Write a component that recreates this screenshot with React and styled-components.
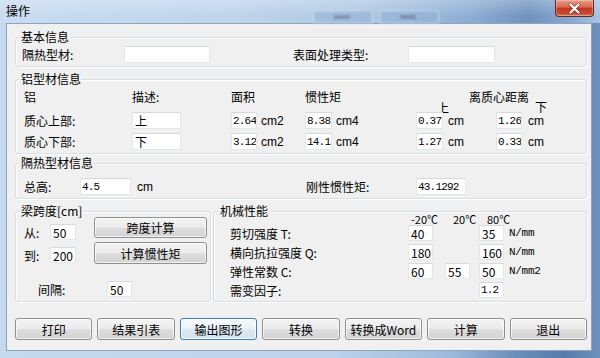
import React from 'react';
import styled, { createGlobalStyle } from 'styled-components';

const GlobalStyle = createGlobalStyle`
  html, body {
    margin: 0;
    padding: 0;
  }
  body {
    font-family: "Noto Sans CJK SC", "Liberation Sans", sans-serif;
    font-size: 12px;
    color: #000;
  }
`;

const CJK = '"Noto Sans CJK SC", "Liberation Sans", sans-serif';
const MONO = '"Liberation Mono", "DejaVu Sans Mono", monospace';

const Window = styled.div`
  width: 600px;
  height: 358px;
  display: flex;
  flex-direction: column;
  overflow: hidden;
  background: linear-gradient(to right, #c6d9ee 0%, #bdd2ea 55%, #9fbadb 75%, #6a8dba 86%, #587ba9 94%, #6e91bd 100%);
`;

const TitleBar = styled.div`
  height: 23px;
  display: flex;
  align-items: flex-start;
  background:
    linear-gradient(to bottom, rgba(255, 255, 255, 0.25), rgba(255, 255, 255, 0) 70%),
    linear-gradient(to right, #c9dcf0 0%, #bed4eb 40%, #adc6e2 62%, #8eaed4 78%, #6f92bf 88%, #88a8cf 95%, #a9c3e1 100%);
`;

const Title = styled.div`
  margin: 4px 0 0 6px;
  line-height: 14px;
  font-size: 12px;
  color: #000;
`;

const GhostTab = styled.div`
  position: relative;
  margin: 10px 0 0 ${(p) => p.$ml}px;
  width: 58px;
  height: 12px;
  border: 1px solid rgba(255, 255, 255, 0.55);
  border-radius: 2px;
  background: rgba(140, 172, 210, 0.45);
  filter: blur(1px);

  &::after {
    content: '';
    position: absolute;
    left: 20px;
    top: 4px;
    width: 16px;
    height: 4px;
    background: rgba(60, 80, 110, 0.35);
  }
`;

const CloseButton = styled.div`
  box-sizing: border-box;
  margin: 0 6px 0 auto;
  width: 39px;
  height: 17px;
  display: flex;
  align-items: center;
  justify-content: center;
  border: 1px solid #5e2a24;
  border-top: none;
  border-radius: 0 0 4px 4px;
  background: linear-gradient(to bottom, #e99a86 0%, #d96a52 45%, #c2331f 50%, #c64a32 85%, #d97a5c 100%);
  box-shadow: inset 0 0 0 1px rgba(255, 255, 255, 0.3);
`;

const Frame = styled.div`
  flex: 1;
  display: flex;
  padding: 0 8px 7px 6px;
`;

const Client = styled.div`
  flex: 1;
  display: flex;
  flex-direction: column;
  padding: 0 4px 10px 8px;
  background: #f0f0f0;
  border: 1px solid #8fa4bd;
`;

const Group = styled.div`
  position: relative;
  box-sizing: border-box;
  margin-top: ${(p) => p.$mt || 0}px;
  padding: ${(p) => p.$pad};
  width: ${(p) => (p.$w ? `${p.$w}px` : 'auto')};
  flex: ${(p) => (p.$grow ? 1 : 'none')};
  border: 1px solid #d5dfe5;
  border-radius: 3px;
  box-shadow: inset 1px 1px 0 #fff, 1px 1px 0 #fff;
`;

const Caption = styled.span`
  position: absolute;
  top: -8px;
  left: ${(p) => p.$left || 4}px;
  padding: 0 1px;
  line-height: 14px;
  background: #f0f0f0;
  white-space: nowrap;
`;

const Label = styled.span`
  line-height: 17px;
  white-space: nowrap;
  padding-left: ${(p) => p.$pl || 0}px;
  width: ${(p) => (p.$w ? `${p.$w}px` : 'auto')};
  flex: none;
`;

const Unit = styled.span`
  font-family: ${(p) => (p.$mono ? MONO : '"Liberation Sans", sans-serif')};
  font-size: ${(p) => (p.$mono ? 11 : 12)}px;
  letter-spacing: ${(p) => (p.$mono ? '-0.3px' : '0')};
  line-height: 16px;
  white-space: nowrap;
`;

const Field = styled.input`
  box-sizing: border-box;
  flex: none;
  width: ${(p) => p.$w}px;
  height: ${(p) => p.$h || 17}px;
  margin: 0;
  padding: 0 0 0 ${(p) => (p.$mono ? 1 : 2)}px;
  border: 1px solid #e3e7ec;
  border-top-color: #d4dae0;
  background: #fff;
  font-family: ${(p) => (p.$mono ? MONO : CJK)};
  font-size: ${(p) => (p.$mono ? 11 : 12)}px;
  letter-spacing: ${(p) => (p.$mono ? '-0.8px' : '0')};
  color: #000;
  outline: none;
`;

const BasicRow = styled.div`
  display: grid;
  grid-template-columns: 102px 86px 83px 115px 87px;
  align-items: center;
  height: 17px;
`;

const AlRow = styled.div`
  display: grid;
  grid-template-columns: 108px 99px 74px 111px 80px 1fr;
  align-items: center;
  height: ${(p) => p.$h}px;
  line-height: ${(p) => p.$h}px;
  margin-top: ${(p) => p.$mt || 0}px;
`;

const HeadCell = styled.span`
  display: block;
  grid-column: ${(p) => p.$col || 'auto'};
  padding-left: ${(p) => p.$pl || 0}px;
  margin-top: ${(p) => p.$shift || 0}px;
  white-space: nowrap;
`;

const Pair = styled.div`
  display: flex;
  align-items: center;
  gap: ${(p) => p.$gap || 4}px;
`;

const HeightRow = styled.div`
  display: grid;
  grid-template-columns: 56px 51px 175px 110px 50px;
  align-items: center;
  height: 17px;
`;

const SpanRow = styled.div`
  display: flex;
  align-items: stretch;
  gap: 2px;
  margin-top: 12px;
`;

const SpanTop = styled.div`
  display: flex;
  gap: 18px;
`;

const SpanFields = styled.div`
  display: flex;
  flex-direction: column;
  gap: 7px;
  padding-top: 7px;
`;

const FieldRow = styled.div`
  display: flex;
  align-items: center;
  height: 16px;
  margin-top: ${(p) => p.$mt || 0}px;
  padding-left: ${(p) => p.$pl || 0}px;
`;

const SpanButtons = styled.div`
  display: flex;
  flex-direction: column;
  gap: 4px;
  width: 113px;
`;

const Button = styled.div`
  box-sizing: border-box;
  height: ${(p) => p.$h || 22}px;
  flex: ${(p) => (p.$fill ? 1 : 'none')};
  display: flex;
  align-items: center;
  justify-content: center;
  border: 1px solid ${(p) => (p.$focused ? '#3c7fb1' : '#8e8f8f')};
  border-radius: 3px;
  background: ${(p) => (p.$focused
    ? 'linear-gradient(to bottom, #f6fafd 0%, #eaf3f9 48%, #dde9f2 52%, #d3e3ef 100%)'
    : 'linear-gradient(to bottom, #f3f3f3 0%, #ececec 48%, #dedede 52%, #d2d2d2 100%)')};
  box-shadow: inset 0 0 0 1px ${(p) => (p.$focused ? 'rgba(255, 255, 255, 0.8)' : 'rgba(255, 255, 255, 0.7)')};
  white-space: nowrap;
  color: #000;
`;

const MechHead = styled.div`
  display: grid;
  grid-template-columns: 178px 37px 34px 30px 1fr;
  height: 13px;
  line-height: 12px;
  font-size: 11px;
`;

const MechGrid = styled.div`
  display: grid;
  grid-template-columns: 178px 37px 34px 30px 1fr;
  grid-auto-rows: 16px;
  row-gap: 3px;
  align-items: center;
`;

const Cell = styled.div`
  grid-column: ${(p) => p.$col};
  padding-left: ${(p) => p.$pl || 0}px;
  display: flex;
  align-items: center;
  white-space: nowrap;
`;

const ButtonBar = styled.div`
  display: flex;
  gap: 5px;
  margin-top: 16px;
`;

const CloseIcon = () => (
  <svg width="13" height="11" viewBox="0 0 13 11">
    <path d="M2.5 1.5 L10.5 9.5 M10.5 1.5 L2.5 9.5" stroke="#4a1712" strokeWidth="3.6" strokeLinecap="round" opacity="0.55" />
    <path d="M2.5 1.5 L10.5 9.5 M10.5 1.5 L2.5 9.5" stroke="#fff" strokeWidth="2.2" strokeLinecap="round" />
  </svg>
);

const ALU_ROWS = [
  { name: '质心上部:', desc: '上', area: '2.64', inertia: '8.38', up: '0.37', down: '1.26' },
  { name: '质心下部:', desc: '下', area: '3.12', inertia: '14.1', up: '1.27', down: '0.33' },
];

const MECH_ROWS = [
  { name: '剪切强度 T:', a: '40', c: '35', unit: 'N/mm' },
  { name: '横向抗拉强度 Q:', a: '180', c: '160', unit: 'N/mm' },
  { name: '弹性常数 C:', a: '60', b: '55', c: '50', unit: 'N/mm2' },
  { name: '需变因子:', c: '1.2', mono: true },
];

const ACTIONS = ['打印', '结果引表', '输出图形', '转换', '转换成Word', '计算', '退出'];

export default function App() {
  return (
    <>
      <GlobalStyle />
      <Window>
        <TitleBar>
          <Title>操作</Title>
          <GhostTab $ml={283} />
          <GhostTab $ml={6} />
          <CloseButton>
            <CloseIcon />
          </CloseButton>
        </TitleBar>
        <Frame>
          <Client>
            <Group $mt={13} $pad="8px 0 3px 6px">
              <Caption>基本信息</Caption>
              <BasicRow>
                <Label>隔热型材:</Label>
                <Field $w={86} defaultValue="" />
                <span />
                <Label>表面处理类型:</Label>
                <Field $w={87} defaultValue="" />
              </BasicRow>
            </Group>

            <Group $mt={12} $pad="10px 0 3px 8px">
              <Caption>铝型材信息</Caption>
              <AlRow $h={14}>
                <HeadCell>铝</HeadCell>
                <HeadCell>描述:</HeadCell>
                <HeadCell>面积</HeadCell>
                <HeadCell>惯性矩</HeadCell>
                <HeadCell $col="5 / span 2" $pl={53}>离质心距离</HeadCell>
              </AlRow>
              <AlRow $h={8}>
                <HeadCell $col="5" $pl={21}>上</HeadCell>
                <HeadCell $col="6" $pl={39} $shift={-3}>下</HeadCell>
              </AlRow>
              {ALU_ROWS.map((r, i) => (
                <AlRow key={r.name} $h={17} $mt={i ? 4 : 0}>
                  <Label>{r.name}</Label>
                  <Field $w={49} defaultValue={r.desc} />
                  <Pair $gap={4}>
                    <Field $w={26} $mono defaultValue={r.area} />
                    <Unit>cm2</Unit>
                  </Pair>
                  <Pair $gap={4}>
                    <Field $w={27} $mono defaultValue={r.inertia} />
                    <Unit>cm4</Unit>
                  </Pair>
                  <Pair $gap={5}>
                    <Field $w={27} $mono defaultValue={r.up} />
                    <Unit>cm</Unit>
                  </Pair>
                  <Pair $gap={6}>
                    <Field $w={26} $mono defaultValue={r.down} />
                    <Unit>cm</Unit>
                  </Pair>
                </AlRow>
              ))}
            </Group>

            <Group $mt={9} $pad="14px 0 3px 8px">
              <Caption>隔热型材信息</Caption>
              <HeightRow>
                <Label>总高:</Label>
                <Field $w={51} $mono defaultValue="4.5" />
                <Pair>
                  <span style={{ width: 2 }} />
                  <Unit>cm</Unit>
                </Pair>
                <Label>刚性惯性矩:</Label>
                <Field $w={50} $mono defaultValue="43.1292" />
              </HeightRow>
            </Group>

            <SpanRow>
              <Group $w={196} $pad="5px 2px 4px 8px">
                <Caption>梁跨度[cm]</Caption>
                <SpanTop>
                  <SpanFields>
                    <FieldRow>
                      <Label $w={26}>从:</Label>
                      <Field $w={26} $h={16} defaultValue="50" />
                    </FieldRow>
                    <FieldRow>
                      <Label $w={26}>到:</Label>
                      <Field $w={26} $h={16} defaultValue="200" />
                    </FieldRow>
                  </SpanFields>
                  <SpanButtons>
                    <Button $h={21}>跨度计算</Button>
                    <Button $h={22}>计算惯性矩</Button>
                  </SpanButtons>
                </SpanTop>
                <FieldRow $mt={17} $pl={14}>
                  <Label $w={69}>间隔:</Label>
                  <Field $w={25} $h={16} defaultValue="50" />
                </FieldRow>
              </Group>

              <Group $grow $pad="0 0 3px 16px">
                <Caption $left={5}>机械性能</Caption>
                <MechHead>
                  <span />
                  <Cell $col="2" $pl={3}>-20℃</Cell>
                  <Cell $col="3" $pl={8}>20℃</Cell>
                  <Cell $col="4" $pl={8}>80℃</Cell>
                </MechHead>
                <MechGrid>
                  {MECH_ROWS.map((r) => (
                    <React.Fragment key={r.name}>
                      <Cell $col="1">{r.name}</Cell>
                      {r.a && (
                        <Cell $col="2">
                          <Field $w={25} $h={16} defaultValue={r.a} />
                        </Cell>
                      )}
                      {r.b && (
                        <Cell $col="3">
                          <Field $w={25} $h={16} defaultValue={r.b} />
                        </Cell>
                      )}
                      <Cell $col="4">
                        <Field $w={25} $h={16} $mono={r.mono} defaultValue={r.c} />
                      </Cell>
                      {r.unit && (
                        <Cell $col="5">
                          <Unit $mono>{r.unit}</Unit>
                        </Cell>
                      )}
                    </React.Fragment>
                  ))}
                </MechGrid>
              </Group>
            </SpanRow>

            <ButtonBar>
              {ACTIONS.map((a) => (
                <Button key={a} $fill $focused={a === '输出图形'}>{a}</Button>
              ))}
            </ButtonBar>
          </Client>
        </Frame>
      </Window>
    </>
  );
}
